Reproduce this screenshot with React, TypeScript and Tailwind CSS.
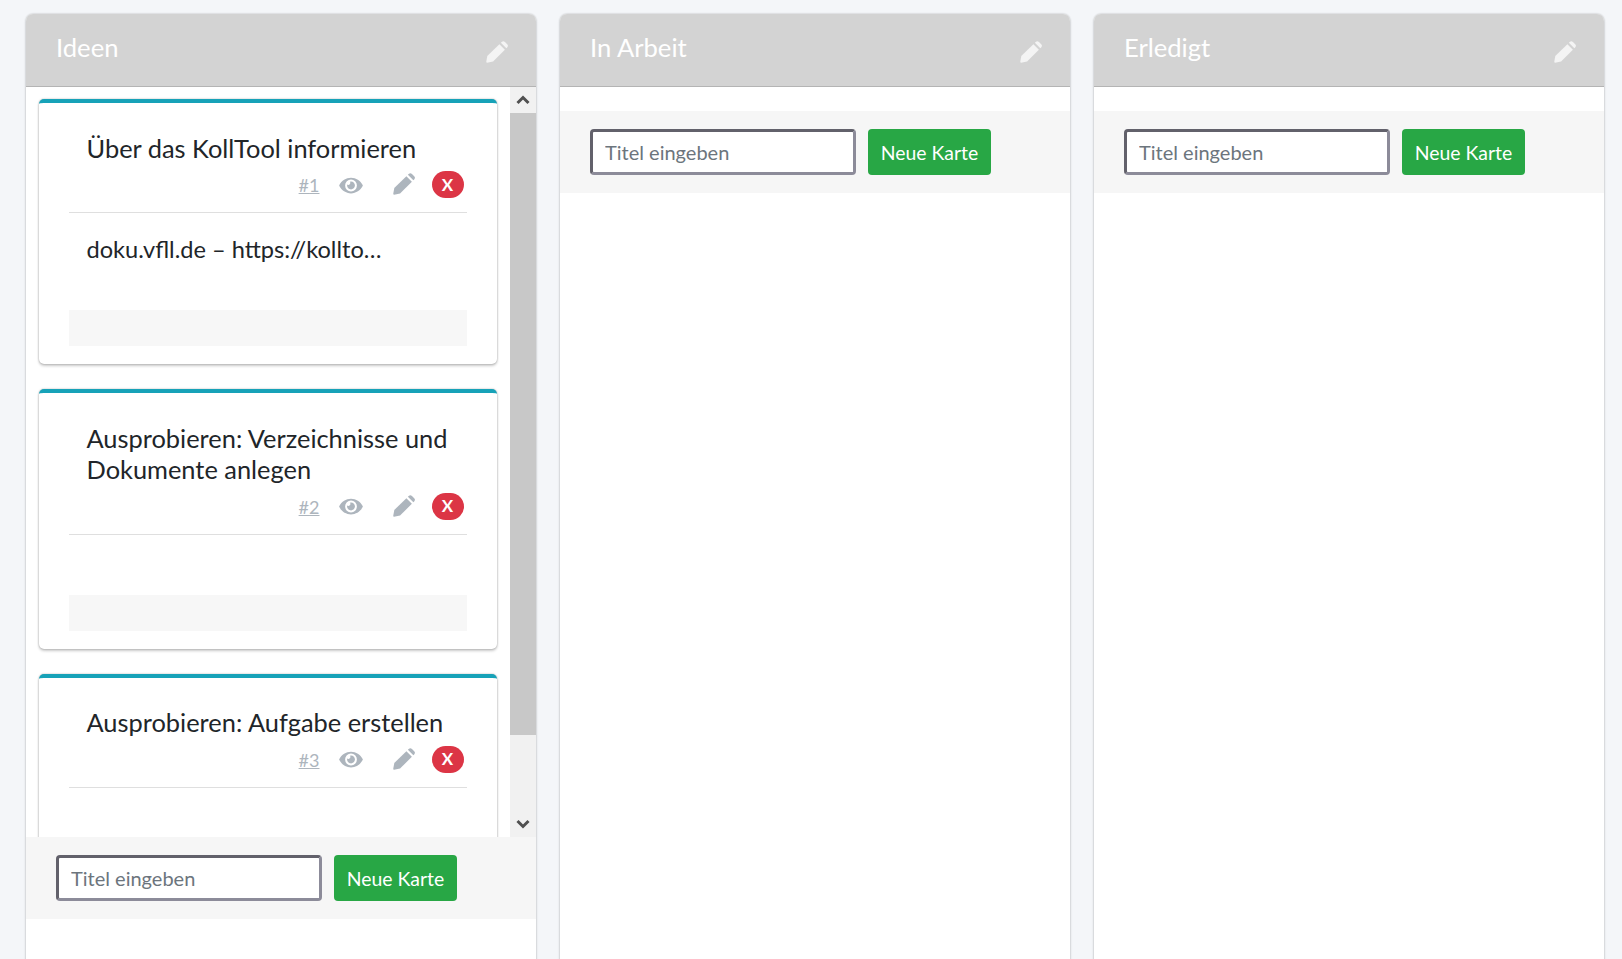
import { FaEye } from "react-icons/fa";

interface CardProps {
	num: number;
	title: string;
	text?: string;
	noFooter?: boolean;
}

const Pencil: React.FC<{ className?: string }> = ({ className }) => (
	<svg viewBox="0 0 24 24" fill="currentColor" className={className}>
		<path d="M1.2 23.6c-.6.1-1-.3-.9-.9l1.1-6.4L14.6 3.6l6 6L7.7 22.4z" />
		<path d="M16.2 2l.9-.9a2.6 2.6 0 0 1 3.6 0l2.4 2.4a2.6 2.6 0 0 1 0 3.6l-.9.9z" />
	</svg>
);

const KanbanCard: React.FC<CardProps> = ({ num, title, text, noFooter }) => {
	return (
		<div className="mb-[25px] shrink-0 w-[458px] bg-white rounded-[5px] border-t-[4px] border-[#17a2b8] shadow-[0_0_2px_rgba(0,0,0,0.3),0_2px_3px_rgba(0,0,0,0.2)]">
			<div className="mx-[30px] border-b border-[#dfdfdf] pb-[14px]">
				<h5 className="pt-[29.5px] pl-[18px] text-[25.4px] leading-[31.5px] text-[#212529]">
					{title}
				</h5>
				<div className="mt-[7px] flex items-center h-[27px] pr-[3px] text-[#adb5bd]">
					<a className="ml-auto mt-[2px] text-[18px] underline">#{num}</a>
					<FaEye className="ml-[19px] mt-[1px] w-[24px] h-[21px]" />
					<Pencil className="ml-[30px] w-[22px] h-[22px] -mt-[1px]" />
					<span className="ml-[17px] flex items-center justify-center w-[32px] h-[27px] rounded-full bg-[#dc3545] text-white text-[17px] font-bold">
						X
					</span>
				</div>
			</div>
			<div className="mx-[30px] pt-[18px] pb-[42px] pl-[18px]">
				{text && (
					<p className="mb-[1px] text-[23.6px] leading-[36px] text-[#212529]">
						{text}
					</p>
				)}
			</div>
			{!noFooter && (
				<div className="mx-[30px] mb-[18px] h-[36px] bg-[#f7f7f7]" />
			)}
		</div>
	);
};

const AddForm = () => (
	<div className="flex items-center h-[82px] pl-[30px] bg-[#f6f6f6]">
		<input
			placeholder="Titel eingeben"
			className="w-[266px] h-[46px] px-[12px] bg-white rounded-[4px] border-[3px] border-t-[#62616b] border-l-[#62616b] border-b-[#8c8b99] border-r-[#8c8b99] text-[20px] outline-none placeholder:text-[#6c757d]"
		/>
		<button className="ml-[12px] w-[123px] h-[46px] pt-[1px] rounded-[4px] bg-[#28a745] text-white text-[19.4px]">
			Neue Karte
		</button>
	</div>
);

const Scrollbar = () => (
	<div className="w-[26px] shrink-0 flex flex-col bg-[#f1f1f1]">
		<div className="h-[26px] flex items-center justify-center">
			<svg width="14" height="10" viewBox="0 0 14 10">
				<path d="M1.5 8 7 2.5 12.5 8" fill="none" stroke="#505050" strokeWidth="3" />
			</svg>
		</div>
		<div className="h-[622px] bg-[#c8c8c8]" />
		<div className="mt-auto h-[26px] flex items-center justify-center">
			<svg width="14" height="10" viewBox="0 0 14 10">
				<path d="M1.5 2 7 7.5 12.5 2" fill="none" stroke="#505050" strokeWidth="3" />
			</svg>
		</div>
	</div>
);

const Column: React.FC<{ title: string; children?: React.ReactNode }> = ({
	title,
	children,
}) => (
	<div className="w-[510px] h-[980px] shrink-0 bg-white rounded-t-[7px] shadow-[0_0_2px_rgba(0,0,0,0.25),0_1px_3px_rgba(0,0,0,0.12)]">
		<div className="flex items-center justify-between h-[73px] pl-[30px] pr-[28px] bg-[#d3d3d3] border-b border-[#b4b4b4] rounded-t-[7px]">
			<span className="text-[25.6px] text-white -mt-[5px]">{title}</span>
			<Pencil className="w-[22px] h-[22px] text-[#f4f4f4] mt-[3px]" />
		</div>
		{children}
		<AddForm />
	</div>
);

export default function App() {
	return (
		<div
			className="h-[959px] overflow-hidden bg-[#f4f6f9] flex gap-[24px] pl-[26px] pt-[14px]"
			style={{ fontFamily: '"Lato", "Noto Sans", sans-serif' }}
		>
			<Column title="Ideen">
				<div className="flex h-[750px] overflow-hidden">
					<div className="flex-1 flex flex-col pl-[12.5px] pt-[12px] overflow-hidden">
						<KanbanCard
							num={1}
							title="Über das KollTool informieren"
							text="doku.vfll.de – https://kollto…"
						/>
						<KanbanCard
							num={2}
							title="Ausprobieren: Verzeichnisse und Dokumente anlegen"
						/>
						<KanbanCard num={3} title="Ausprobieren: Aufgabe erstellen" noFooter />
					</div>
					<Scrollbar />
				</div>
			</Column>
			<Column title="In Arbeit">
				<div className="h-[24px]" />
			</Column>
			<Column title="Erledigt">
				<div className="h-[24px]" />
			</Column>
		</div>
	);
}
